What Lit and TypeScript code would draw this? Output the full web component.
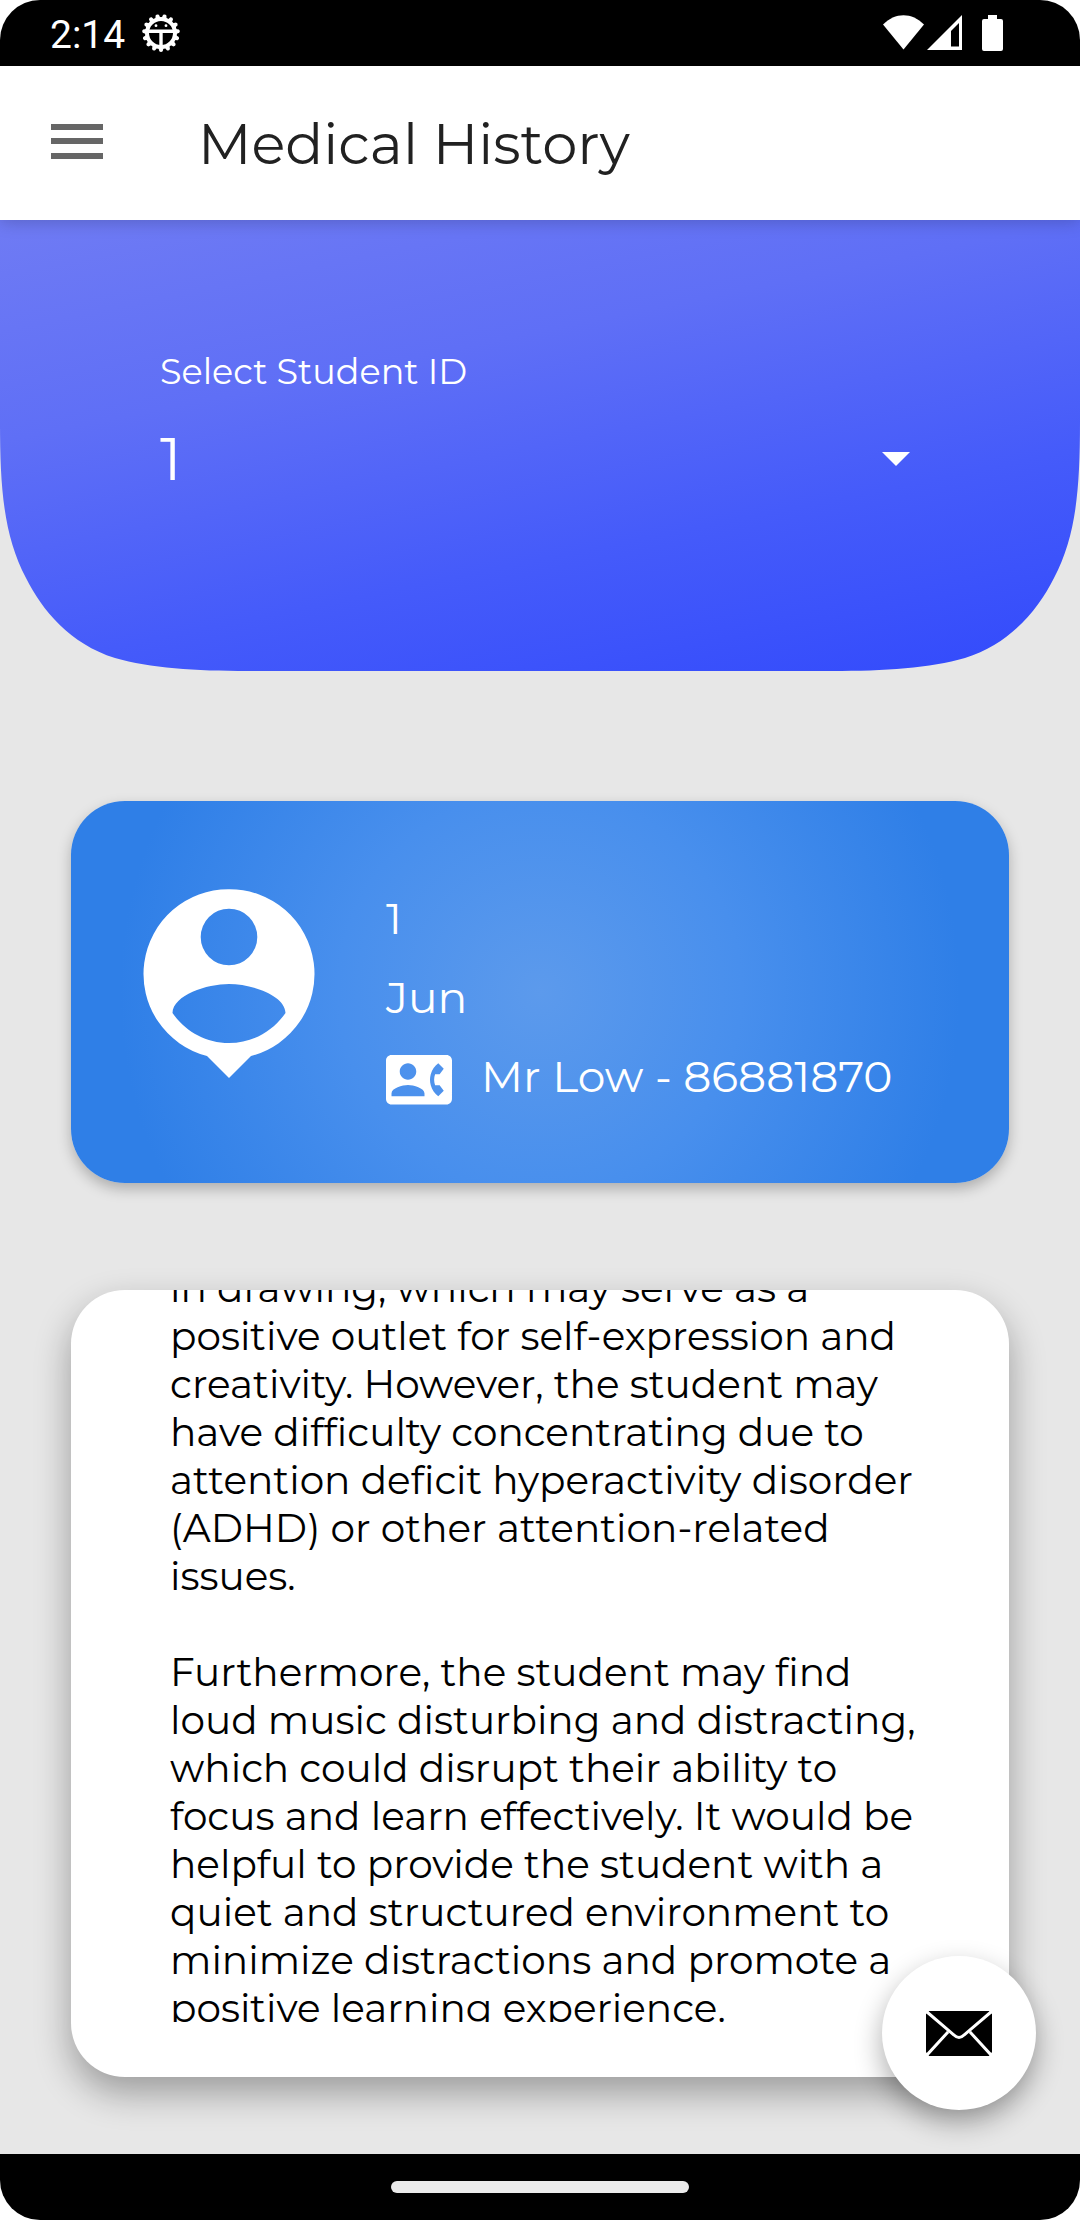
import { LitElement, html, css, svg } from "lit";
import { customElement, query, state } from "lit/decorators.js";

const NOTES = [
  "in drawing, which may serve as a positive outlet for self-expression and creativity. However, the student may have difficulty concentrating due to attention deficit hyperactivity disorder (ADHD) or other attention-related issues.",
  "Furthermore, the student may find loud music disturbing and distracting, which could disrupt their ability to focus and learn effectively. It would be helpful to provide the student with a quiet and structured environment to minimize distractions and promote a positive learning experience.",
];

const TEETH = Array.from({ length: 15 }, (_, i) => 12 + i * 24);

@customElement("status-bar")
class StatusBar extends LitElement {
  static styles = css`
    :host {
      display: flex;
      align-items: center;
      justify-content: space-between;
      height: 66px;
      padding: 0 76px 0 50px;
      background: #000;
      color: #fff;
      font: 400 39px/44px Roboto, "Liberation Sans", sans-serif;
    }
    .side {
      display: flex;
      align-items: center;
      gap: 16px;
    }
    .time {
      padding-top: 4px;
    }
    svg {
      display: block;
    }
  `;

  render() {
    return html`
      <div class="side">
        <span class="time">2:14</span>
        <svg width="40" height="40" viewBox="0 0 40 40" aria-hidden="true">
          <circle cx="20" cy="20" r="14" fill="none" stroke="#fff" stroke-width="4" />
          ${TEETH.map(
            (a) => svg`<path d="M17.500 5L18.300 1.800Q20 .2 21.700 1.800L22.500 5Z" fill="#fff" transform="rotate(${a} 20 20)" />`
          )}
          <path d="M7 18.200H33M20 18V34" stroke="#fff" stroke-width="3.400" fill="none" />
          <circle cx="15" cy="12.700" r="1.400" fill="#fff" />
          <circle cx="25" cy="12.700" r="1.400" fill="#fff" />
        </svg>
      </div>
      <svg width="122" height="38" viewBox="0 0 122 38" fill="#fff" aria-hidden="true">
        <path d="M1 10.500C13-2 30-2 42 10.500L21.500 35.500Z" />
        <path fill-rule="evenodd" d="M45 36L80 1V36ZM69 17V32.500H77V9Z" />
        <path d="M106 1H115V5H119Q121 5 121 7V35Q121 37 119 37H102Q100 37 100 35V7Q100 5 102 5H106Z" />
      </svg>
    `;
  }
}

@customElement("app-root")
class AppRoot extends LitElement {
  static styles = css`
    :host {
      display: block;
      background: #fff;
      font-family: Montserrat, Inter, "Open Sans", sans-serif;
      font-weight: 400;
    }
    * {
      box-sizing: border-box;
    }
    svg {
      display: block;
    }
    button {
      border: 0;
      padding: 0;
      background: none;
      cursor: pointer;
    }
    .screen {
      position: relative;
      display: flex;
      flex-direction: column;
      height: 100vh;
      min-height: 1500px;
      overflow: hidden;
      border-radius: 40px;
      background: #e7e7e7;
    }
    .bar {
      position: relative;
      z-index: 1;
      display: flex;
      align-items: center;
      gap: 80px;
      height: 154px;
      padding: 0 36px;
      background: #fff;
      box-shadow: 0 2px 16px rgba(0, 0, 0, 0.2);
    }
    .title {
      margin: 0;
      padding-top: 2px;
      font-size: 56px;
      line-height: 72px;
      font-weight: 400;
      color: #212121;
    }
    .hero {
      position: relative;
      height: 451px;
      padding: 130px 160px 0;
      color: #fff;
    }
    .shape {
      position: absolute;
      inset: 0;
      width: 100%;
      height: 100%;
    }
    .field {
      position: relative;
      display: flex;
      flex-direction: column;
      gap: 20px;
    }
    .label {
      font-size: 35px;
      line-height: 44px;
    }
    .picker {
      display: grid;
      align-items: center;
    }
    .picker > * {
      grid-area: 1 / 1;
    }
    .select {
      width: 100%;
      height: 90px;
      padding: 0;
      border: 0;
      appearance: none;
      background: transparent;
      color: #fff;
      font: 400 60px/90px Montserrat, Inter, "Open Sans", sans-serif;
    }
    .arrow {
      justify-self: end;
      margin-right: 10px;
      pointer-events: none;
    }
    .content {
      flex: 1;
      min-height: 0;
      display: flex;
      flex-direction: column;
      gap: 107px;
      padding: 130px 71px 77px;
    }
    .student {
      display: flex;
      align-items: flex-start;
      gap: 71px;
      height: 382px;
      padding: 78px 72px 0;
      border-radius: 54px;
      color: #fff;
      background: radial-gradient(circle 420px, #5c9aec 0%, #488fed 48%, #2f7fe7 100%);
      box-shadow: 0 6px 14px rgba(0, 0, 0, 0.25);
    }
    .facts {
      display: flex;
      flex-direction: column;
      font-size: 44px;
      line-height: 79px;
    }
    .facts > span {
      display: flex;
      align-items: center;
      gap: 29px;
    }
    .pin {
      margin: 10px 0 0;
    }
    .notes {
      flex: 1;
      min-height: 0;
      padding: 0 90px 55px 99px;
      border-radius: 54px;
      background: #fff;
      box-shadow: 0 16px 36px rgba(0, 0, 0, 0.33);
    }
    .scroller {
      height: 100%;
      overflow-y: auto;
      scrollbar-width: none;
      font-size: 39px;
      line-height: 48px;
      color: #000;
    }
    .scroller p {
      margin: 0 0 48px;
    }
    .scroller p:last-child {
      margin: 0;
    }
    .mail {
      position: absolute;
      right: 44px;
      bottom: 110px;
      display: grid;
      place-items: center;
      width: 154px;
      height: 154px;
      border-radius: 50%;
      background: #fff;
      box-shadow: 0 12px 28px rgba(0, 0, 0, 0.33);
    }
    .nav {
      display: grid;
      place-items: center;
      height: 66px;
      background: #000;
    }
    .handle {
      width: 298px;
      height: 12px;
      border-radius: 6px;
      background: #ebebeb;
    }
  `;

  @state() student = "1";
  @query(".scroller") scroller!: HTMLElement;

  firstUpdated() {
    this.scroller.scrollTop = 26;
  }

  render() {
    return html`
      <div class="screen">
        <status-bar></status-bar>
        <header class="bar">
          <button aria-label="Open menu">
            <svg width="82" height="82" viewBox="0 0 82 82" fill="#666">
              <path d="M15 22H67V28H15ZM15 36H67V42H15ZM15 51H67V57H15Z" />
            </svg>
          </button>
          <h1 class="title">Medical History</h1>
        </header>
        <section class="hero">
          <svg class="shape" viewBox="0 0 1080 451" preserveAspectRatio="none" aria-hidden="true">
            <defs>
              <linearGradient id="fill" gradientUnits="userSpaceOnUse" x1="0" y1="0" x2="132" y2="645">
                <stop offset="0" stop-color="#6f7bf4" />
                <stop offset="0.33" stop-color="#5f6ff6" />
                <stop offset="0.67" stop-color="#455bfa" />
                <stop offset="1" stop-color="#324afc" />
              </linearGradient>
            </defs>
            <path
              fill="url(#fill)"
              d="M0 0H1080V202C1080 270 1076 316 1054 358C1038 390 1010 424 965 438C930 448 885 451 832 451H248C195 451 150 448 115 438C70 424 42 390 26 358C4 316 0 270 0 202Z"
            />
          </svg>
          <div class="field">
            <label class="label" for="student">Select Student ID</label>
            <div class="picker">
              <select
                class="select"
                id="student"
                .value=${this.student}
                @change=${(e: Event) => (this.student = (e.target as HTMLSelectElement).value)}
              >
                <option value="1">1</option>
              </select>
              <svg class="arrow" width="28" height="14" viewBox="0 0 28 14" aria-hidden="true">
                <path d="M0 0H28L14 14Z" fill="#fff" />
              </svg>
            </div>
          </div>
        </section>
        <main class="content">
          <section class="student">
            <svg class="pin" width="172" height="190" viewBox="23 29 172 190" aria-hidden="true">
              <path
                fill="#fff"
                fill-rule="evenodd"
                d="M109 29.300A84.700 84.700 0 0 1 131 196L109 218L87 196A84.700 84.700 0 0 1 109 29.300ZM109 48.700A28.300 28.300 0 1 0 109 105.300A28.300 28.300 0 1 0 109 48.700ZM52.500 153C65 171 85 183 109 183S153 171 165.500 153C165 135 131 124 109 124S53 135 52.500 153Z"
              />
            </svg>
            <div class="facts">
              <span>${this.student}</span>
              <span>Jun</span>
              <span>
                <svg width="66" height="66" viewBox="0 -1 24 24" fill="#fff" aria-hidden="true">
                  <path
                    d="M22 3H2C.9 3 0 3.900 0 5v14c0 1.100.9 2 2 2h20c1.100 0 1.990-.9 1.990-2L24 5c0-1.100-.9-2-2-2zM8 6c1.660 0 3 1.340 3 3s-1.340 3-3 3-3-1.340-3-3 1.340-3 3-3zm6 12H2v-1c0-2 4-3.100 6-3.100s6 1.100 6 3.100v1zm3.850-4h1.640L21 16l-1.990 1.990c-1.310-.98-2.280-2.380-2.730-3.990-.18-.64-.28-1.310-.28-2s.1-1.360.28-2c.45-1.620 1.420-3.010 2.730-3.990L21 8l-1.510 2h-1.640c-.22.63-.35 1.300-.35 2s.13 1.370.35 2z"
                  />
                </svg>
                Mr Low - 86881870
              </span>
            </div>
          </section>
          <section class="notes">
            <div class="scroller">${NOTES.map((note) => html`<p>${note}</p>`)}</div>
          </section>
          <button class="mail" aria-label="Send mail">
            <svg width="66" height="47" viewBox="0 0 66 47">
              <path d="M3 1H63L66 4V42L63 46H3L0 42V4Z" />
              <path
                d="M1 2L28 25Q33 30 38 25L65 2M1 45L22 22M65 45L44 22"
                fill="none"
                stroke="#fff"
                stroke-width="3"
              />
            </svg>
          </button>
        </main>
        <footer class="nav"><div class="handle"></div></footer>
      </div>
    `;
  }
}
